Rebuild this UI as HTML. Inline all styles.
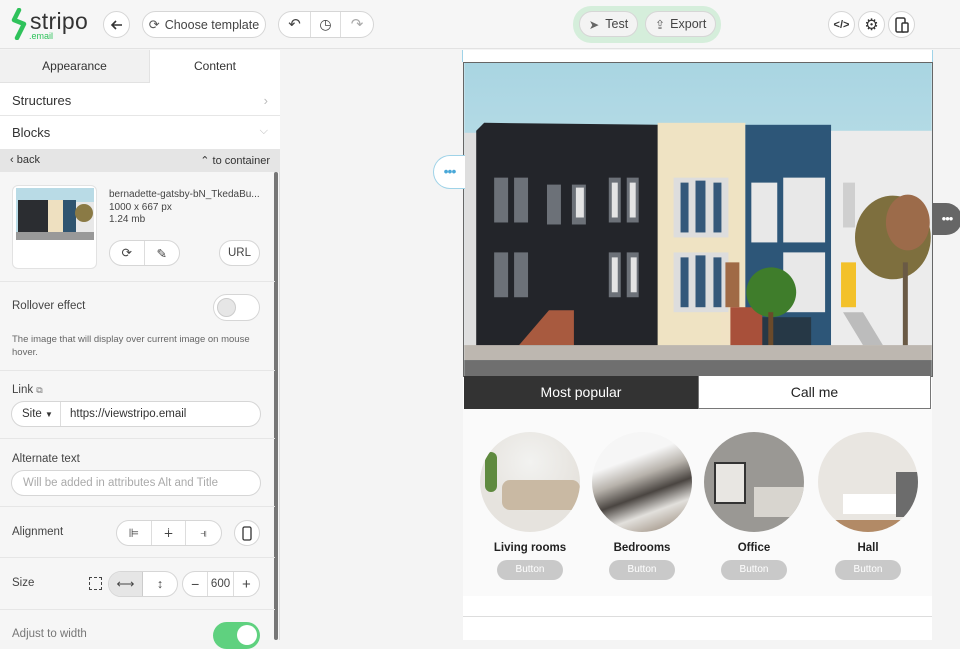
<!DOCTYPE html>
<html><head><meta charset="utf-8"><style>
*{box-sizing:border-box;margin:0;padding:0}
body{width:960px;height:640px;overflow:hidden;background:#f4f4f4;font-family:"Liberation Sans",Arial,sans-serif;color:#333;position:relative}
.abs{position:absolute}
.hdr{left:0;top:0;width:960px;height:49px;background:#f6f6f6;border-bottom:1px solid #e2e2e2}
.pill{position:absolute;border:1px solid #d6d6d6;background:#fff;border-radius:14px;height:26px;display:flex;align-items:center;justify-content:center;font-size:12.5px;color:#444}
.circ{position:absolute;width:27px;height:27px;border:1px solid #d6d6d6;border-radius:50%;background:#fff;display:flex;align-items:center;justify-content:center}
.left{left:0;top:50px;width:280px;height:590px;background:#f6f6f6;border-right:1px solid #ddd}
.row{position:absolute;left:0;width:275px;border-bottom:1px solid #e6e6e6}
.lbl{position:absolute;font-size:11.5px;color:#444}
.inp{position:absolute;border:1px solid #d6d6d6;border-radius:13px;background:#fff;height:26px;font-size:11.5px;display:flex;align-items:center}
.card{position:absolute;top:432px;width:100px;text-align:center}
.card .c{width:100px;height:100px;border-radius:50%;margin:0 auto;overflow:hidden}
.card b{display:block;font-size:11.5px;color:#222;margin-top:10px}
.card span{display:inline-block;margin-top:6px;width:66px;height:20px;border-radius:10px;background:#c9c9c9;color:#fff;font-size:10px;line-height:20px}
</style></head><body>
<div class="abs hdr"></div>
<svg class="abs" style="left:10px;top:8px" width="24" height="32" viewBox="0 0 24 32"><path d="M9 2 L4 12 L14 16 L7 30" stroke="#2fc25b" stroke-width="4.5" fill="none" stroke-linecap="round" stroke-linejoin="round"/></svg>
<div class="abs" style="left:30px;top:8px;font-size:23px;color:#333;letter-spacing:0.3px">stripo</div>
<div class="abs" style="left:29px;top:31px;font-size:9px;color:#2fc25b">.email</div>
<div class="circ" style="left:103px;top:11px"><svg width="14" height="14" viewBox="0 0 14 14"><path d="M12 7H2M6 3L2 7l4 4" stroke="#333" stroke-width="1.6" fill="none"/></svg></div>
<div class="pill" style="left:142px;top:11px;width:124px;height:27px"><span style="font-size:13px;margin-right:5px;color:#555">⟳</span>Choose template</div>
<div class="pill" style="left:278px;top:11px;width:96px;height:27px;justify-content:flex-start">
<div style="width:32px;text-align:center;font-size:15px;border-right:1px solid #ddd;height:100%;line-height:25px">↶</div>
<div style="width:30px;text-align:center;font-size:14px;border-right:1px solid #ddd;height:100%;line-height:25px">◷</div>
<div style="width:32px;text-align:center;font-size:15px;color:#aaa;line-height:25px">↷</div></div>
<div class="abs" style="left:573px;top:6px;width:148px;height:37px;background:#d5eedb;border-radius:18px"></div>
<div class="pill" style="left:579px;top:11px;width:59px;height:26px;background:#f3f3f3"><span style="margin-right:6px;color:#666">➤</span>Test</div>
<div class="pill" style="left:645px;top:11px;width:71px;height:26px;background:#f3f3f3"><span style="margin-right:5px;color:#666">⇪</span>Export</div>
<div class="circ" style="left:828px;top:11px;font-size:11px;font-weight:bold">&lt;/&gt;</div>
<div class="circ" style="left:858px;top:11px;font-size:16px">⚙</div>
<div class="circ" style="left:888px;top:11px"><svg width="16" height="16" viewBox="0 0 16 16"><rect x="2" y="1" width="9" height="14" rx="1.5" stroke="#333" stroke-width="1.5" fill="none"/><rect x="8" y="6" width="6" height="9" rx="1" stroke="#333" stroke-width="1.5" fill="#fff"/></svg></div>

<div class="abs left"></div>
<div class="abs" style="left:0;top:50px;width:150px;height:33px;background:#f1f1f1;border-bottom:1px solid #e2e2e2;border-right:1px solid #e2e2e2;font-size:12px;text-align:center;line-height:33px">Appearance</div>
<div class="abs" style="left:150px;top:50px;width:130px;height:33px;background:#fff;font-size:12px;text-align:center;line-height:33px">Content</div>
<div class="abs" style="left:0;top:83px;width:280px;height:33px;background:#fff;border-bottom:1px solid #e6e6e6;font-size:13px;padding:10px 12px">Structures<span style="float:right;color:#bbb">›</span></div>
<div class="abs" style="left:0;top:116px;width:280px;height:33px;background:#fff;font-size:13px;padding:9px 12px">Blocks<span style="float:right;color:#bbb;font-size:11px">⌵</span></div>
<div class="abs" style="left:0;top:149px;width:280px;height:23px;background:#e5e5e5;font-size:11px;padding:5px 10px">‹ back<span style="float:right">⌃ to container</span></div>
<div class="abs" style="left:274px;top:172px;width:4px;height:468px;background:#777;border-radius:2px"></div>
<div class="row" style="top:172px;height:110px"></div>
<div class="abs" style="left:12px;top:185px;width:85px;height:84px;background:#fff;border:1px solid #e2e2e2;border-radius:6px"></div>
<svg class="abs" style="left:16px;top:188px" width="78" height="52" viewBox="0 0 78 52"><rect width="78" height="52" fill="#b9dbe6"/><rect x="2" y="12" width="30" height="37" fill="#2b2d31"/><rect x="32" y="12" width="15" height="37" fill="#eee0c0"/><rect x="47" y="12" width="13" height="37" fill="#2f5470"/><rect x="60" y="14" width="18" height="35" fill="#e8e8e8"/><circle cx="68" cy="25" r="9" fill="#8a7a45"/><rect y="44" width="78" height="8" fill="#999"/></svg>
<div class="lbl" style="left:109px;top:189px;font-size:10px;line-height:12.5px">bernadette-gatsby-bN_TkedaBu...<br>1000 x 667 px<br>1.24 mb</div>
<div class="pill" style="left:109px;top:240px;width:71px;height:26px;justify-content:flex-start"><div style="width:35px;text-align:center;border-right:1px solid #ddd;line-height:24px">⟳</div><div style="width:35px;text-align:center">✎</div></div>
<div class="pill" style="left:219px;top:240px;width:41px;height:26px;font-size:11.5px">URL</div>
<div class="row" style="top:282px;height:89px"></div>
<div class="lbl" style="left:12px;top:300px">Rollover effect</div>
<div class="abs" style="left:213px;top:294px;width:47px;height:27px;border:1px solid #d6d6d6;border-radius:14px;background:#fff"><div style="margin:3px;width:19px;height:19px;border-radius:50%;background:#e6e6e6;border:1px solid #ccc"></div></div>
<div class="lbl" style="left:12px;top:333px;width:255px;font-size:9.5px;line-height:13px;color:#666">The image that will display over current image on mouse hover.</div>
<div class="row" style="top:371px;height:68px"></div>
<div class="lbl" style="left:12px;top:384px">Link <span style="font-size:9px;color:#777">⧉</span></div>
<div class="inp" style="left:11px;top:401px;width:250px"><div style="width:49px;border-right:1px solid #ddd;height:100%;line-height:24px;padding-left:10px">Site <span style="font-size:8px">▼</span></div><div style="padding-left:9px">https://viewstripo.email</div></div>
<div class="row" style="top:439px;height:68px"></div>
<div class="lbl" style="left:12px;top:453px">Alternate text</div>
<div class="inp" style="left:11px;top:470px;width:250px;color:#aaa;padding-left:11px">Will be added in attributes Alt and Title</div>
<div class="row" style="top:507px;height:51px"></div>
<div class="lbl" style="left:12px;top:526px">Alignment</div>
<div class="pill" style="left:116px;top:520px;width:106px;height:26px;justify-content:flex-start;font-size:12px"><div style="width:35px;text-align:center;border-right:1px solid #ddd;line-height:24px">⊫</div><div style="width:35px;text-align:center;border-right:1px solid #ddd;line-height:24px">∔</div><div style="width:35px;text-align:center">⫣</div></div>
<div class="circ" style="left:234px;top:520px;width:26px;height:26px"><svg width="10" height="15"><rect x="1" y="1" width="8" height="13" rx="1.5" stroke="#333" fill="none" stroke-width="1.3"/></svg></div>
<div class="row" style="top:558px;height:52px"></div>
<div class="lbl" style="left:12px;top:577px">Size</div>
<div class="abs" style="left:89px;top:577px;width:13px;height:13px;border:1.5px dashed #444"></div>
<div class="pill" style="left:108px;top:571px;width:70px;height:26px;justify-content:flex-start;overflow:hidden"><div style="width:35px;text-align:center;background:#e6e6e6;border-right:1px solid #ccc;line-height:24px">⟷</div><div style="width:35px;text-align:center">↕</div></div>
<div class="pill" style="left:182px;top:571px;width:78px;height:26px;justify-content:flex-start;font-size:11.5px"><div style="width:26px;text-align:center;border-right:1px solid #ddd;line-height:24px;font-size:14px">−</div><div style="width:26px;text-align:center;border-right:1px solid #ddd;line-height:24px">600</div><div style="width:26px;text-align:center;font-size:15px">+</div></div>
<div class="lbl" style="left:12px;top:628px;color:#777">Adjust to width</div>
<div class="abs" style="left:213px;top:622px;width:47px;height:27px;border-radius:14px;background:#5fd17f"><div style="margin:3px 0 0 24px;width:20px;height:20px;border-radius:50%;background:#fff"></div></div>

<div class="abs" style="left:463px;top:50px;width:469px;height:590px;background:#fff"></div>
<div class="abs" style="left:462px;top:50px;width:1px;height:12px;background:#9fd3e8"></div>
<div class="abs" style="left:932px;top:50px;width:1px;height:12px;background:#9fd3e8"></div>
<svg class="abs" style="left:463px;top:62px;border:1px solid #666" width="470" height="315" viewBox="0 0 469 314">
<defs><linearGradient id="sky" x1="0" y1="0" x2="0" y2="1"><stop offset="0" stop-color="#a9d5e2"/><stop offset="1" stop-color="#d6ebef"/></linearGradient></defs>
<rect width="469" height="314" fill="url(#sky)"/>
<rect x="0" y="70" width="14" height="215" fill="#dedede"/>
<path d="M12 68 L20 60 L195 62 L195 285 L12 285Z" fill="#23252a"/>
<g fill="#6c7178"><rect x="30" y="115" width="14" height="45"/><rect x="50" y="115" width="14" height="45"/><rect x="83" y="122" width="14" height="40"/><rect x="108" y="122" width="14" height="40"/><rect x="145" y="115" width="12" height="45"/><rect x="163" y="115" width="12" height="45"/><rect x="30" y="190" width="14" height="45"/><rect x="50" y="190" width="14" height="45"/><rect x="145" y="190" width="12" height="45"/><rect x="163" y="190" width="12" height="45"/></g>
<g fill="#e4e4e4"><rect x="112" y="125" width="8" height="30"/><rect x="148" y="120" width="6" height="35"/><rect x="166" y="120" width="6" height="35"/><rect x="148" y="195" width="6" height="35"/><rect x="167" y="195" width="6" height="35"/></g>
<path d="M55 283 L85 248 L110 248 L110 283Z" fill="#a85a3f"/>
<rect x="194" y="60" width="88" height="225" fill="#efe3c3"/>
<rect x="210" y="115" width="55" height="60" fill="#ddd"/><rect x="210" y="190" width="55" height="60" fill="#ddd"/>
<g fill="#34587a"><rect x="217" y="120" width="8" height="50"/><rect x="232" y="118" width="10" height="52"/><rect x="250" y="120" width="8" height="50"/><rect x="217" y="195" width="8" height="50"/><rect x="232" y="193" width="10" height="52"/><rect x="250" y="195" width="8" height="50"/></g>
<rect x="258" y="250" width="25" height="35" fill="#f0e2c4"/><rect x="262" y="200" width="14" height="45" fill="#a06a45"/>
<rect x="282" y="62" width="86" height="223" fill="#2d5678"/>
<rect x="288" y="120" width="26" height="60" fill="#e8e8e8"/><rect x="320" y="115" width="42" height="65" fill="#e8e8e8"/><rect x="320" y="190" width="42" height="60" fill="#e8e8e8"/>
<rect x="298" y="255" width="50" height="30" fill="#263846"/>
<rect x="267" y="245" width="32" height="40" fill="#a8503a"/>
<circle cx="308" cy="230" r="25" fill="#3f7d2b"/><rect x="305" y="250" width="5" height="35" fill="#6a4a2a"/>
<rect x="368" y="68" width="101" height="217" fill="#ececec"/>
<rect x="380" y="120" width="12" height="45" fill="#cfcfcf"/><rect x="378" y="200" width="15" height="45" fill="#f3c12a"/>
<ellipse cx="430" cy="175" rx="38" ry="42" fill="#7e6f3e"/><ellipse cx="445" cy="160" rx="22" ry="28" fill="#9c6b4a"/><rect x="440" y="200" width="5" height="85" fill="#6a5a45"/>
<path d="M380 250 L400 283 L420 283 L400 250Z" fill="#bcbcbc"/>
<rect y="283" width="469" height="15" fill="#bdb7b0"/>
<rect y="298" width="469" height="16" fill="#6f6f6f"/>
</svg>
<div class="abs" style="left:433px;top:155px;width:32px;height:34px;border:1px solid #9fd3e8;border-right:none;border-radius:17px 0 0 17px;background:#fff;color:#4aa8d8;font-size:14px;line-height:30px;text-align:center;letter-spacing:-1px">•••</div>
<div class="abs" style="left:932px;top:203px;width:30px;height:32px;border-radius:0 16px 16px 0;background:#666;color:#fff;font-size:13px;line-height:32px;text-align:center;letter-spacing:-1px">•••</div>
<div class="abs" style="left:464px;top:376px;width:234px;height:33px;background:#333;color:#fff;font-size:14px;text-align:center;line-height:33px">Most popular</div>
<div class="abs" style="left:698px;top:376px;width:233px;height:33px;background:#fff;border:1px solid #777;border-top:none;font-size:14px;text-align:center;line-height:32px;color:#222">Call me</div>
<div class="abs" style="left:463px;top:409px;width:469px;height:187px;background:#fafafa"></div>
<div class="card" style="left:480px"><div class="c" style="background:radial-gradient(circle at 50% 30%,#f2f2f0,#e6e3de 60%);position:relative"><div style="position:absolute;left:22px;top:48px;width:78px;height:30px;background:#c9b9a3;border-radius:8px"></div><div style="position:absolute;left:5px;top:20px;width:12px;height:40px;background:#5f8a3f;border-radius:6px"></div></div><b>Living rooms</b><span>Button</span></div>
<div class="card" style="left:592px"><div class="c" style="background:linear-gradient(160deg,#f6f6f6 30%,#b8b3ac 45%,#4a4541 60%,#e2e0dc 75%,#8c7b6a)"></div><b>Bedrooms</b><span>Button</span></div>
<div class="card" style="left:704px"><div class="c" style="background:#9a9894;position:relative"><div style="position:absolute;left:10px;top:30px;width:32px;height:42px;background:#e8e6e2;border:2px solid #333"></div><div style="position:absolute;left:50px;top:55px;width:50px;height:30px;background:#d8d5cf"></div></div><b>Office</b><span>Button</span></div>
<div class="card" style="left:818px"><div class="c" style="background:#e9e6e1;position:relative"><div style="position:absolute;left:25px;top:62px;width:55px;height:20px;background:#fff"></div><div style="position:absolute;left:78px;top:40px;width:22px;height:45px;background:#6c6c6c"></div><div style="position:absolute;left:0;top:88px;width:100px;height:12px;background:#b28a66"></div></div><b>Hall</b><span>Button</span></div>
<div class="abs" style="left:463px;top:616px;width:469px;height:1px;background:#ddd"></div>
</body></html>
